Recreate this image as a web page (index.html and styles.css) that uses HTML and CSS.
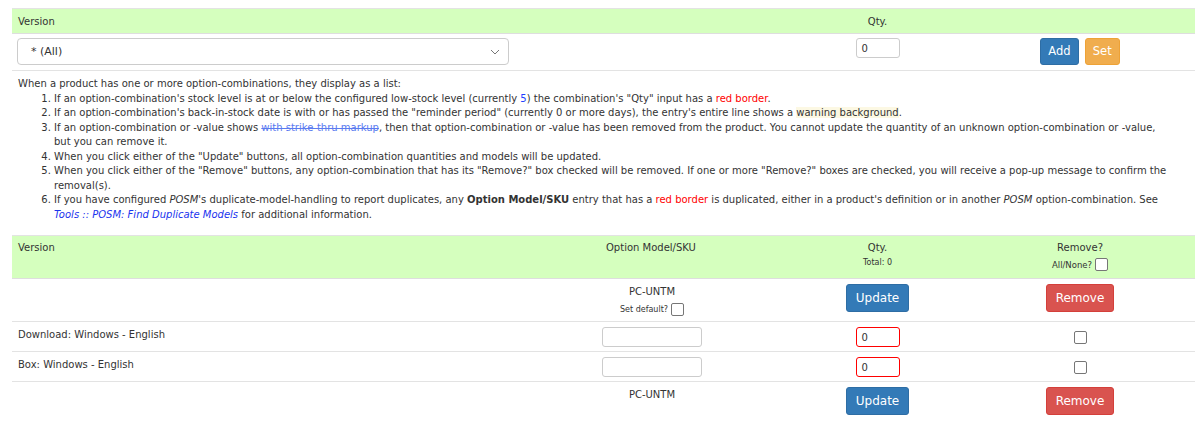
FILE: index.html
```html
<!DOCTYPE html>
<html>
<head>
<meta charset="utf-8">
<link rel="stylesheet" href="styles.css">
</head>
<body>
<div class="page">
  <div class="tbl top">
    <div class="row head">
      <div class="c c-ver">Version</div>
      <div class="c c-qty center">Qty.</div>
      <div class="c c-act"></div>
    </div>
    <div class="row body-row">
      <div class="c c-ver">
        <div class="select"><span>* (All)</span>
          <svg class="chev" width="10" height="6" viewBox="0 0 10 6"><path d="M1 1l4 4 4-4" fill="none" stroke="#777" stroke-width="1"/></svg>
        </div>
      </div>
      <div class="c c-qty center"><div class="qty">0</div></div>
      <div class="c c-act center">
        <span class="btn btn-primary sm">Add</span>
        <span class="btn btn-warning sm">Set</span>
      </div>
    </div>
  </div>

  <div class="notes">
    <p>When a product has one or more option-combinations, they display as a list:</p>
    <ol>
      <li>If an option-combination's stock level is at or below the configured low-stock level (currently <span class="blue">5</span>) the combination's "Qty" input has a <span class="red">red border</span>.</li>
      <li>If an option-combination's back-in-stock date is with or has passed the "reminder period" (currently 0 or more days), the entry's entire line shows a <span class="warn">warning background</span>.</li>
      <li>If an option-combination or -value shows <span class="strike">with strike-thru markup</span>, then that option-combination or -value has been removed from the product. You cannot update the quantity of an unknown option-combination or -value,<br>but you can remove it.</li>
      <li>When you click either of the "Update" buttons, all option-combination quantities and models will be updated.</li>
      <li>When you click either of the "Remove" buttons, any option-combination that has its "Remove?" box checked will be removed. If one or more "Remove?" boxes are checked, you will receive a pop-up message to confirm the removal(s).</li>
      <li>If you have configured <i>POSM</i>'s duplicate-model-handling to report duplicates, any <b>Option Model/SKU</b> entry that has a <span class="red">red border</span> is duplicated, either in a product's definition or in another <i>POSM</i> option-combination. See<br><a class="link">Tools :: POSM: Find Duplicate Models</a> for additional information.</li>
    </ol>
  </div>

  <div class="tbl bottom">
    <div class="row head head2">
      <div class="c c-ver">Version</div>
      <div class="c c-model">Option Model/SKU</div>
      <div class="c c-qty center">Qty.<div class="small">Total: 0</div></div>
      <div class="c c-act center">Remove?<div class="small allnone">All/None? <span class="cb"></span></div></div>
    </div>
    <div class="row r-btn">
      <div class="c c-ver"></div>
      <div class="c c-model"><div class="model-box">PC-UNTM<div class="small setdef">Set default? <span class="cb"></span></div></div></div>
      <div class="c c-qty center"><span class="btn btn-primary">Update</span></div>
      <div class="c c-act center"><span class="btn btn-danger">Remove</span></div>
    </div>
    <div class="row r-item">
      <div class="c c-ver">Download: Windows - English</div>
      <div class="c c-model"><div class="model-input"></div></div>
      <div class="c c-qty center"><div class="qty err">0</div></div>
      <div class="c c-act center"><span class="cb"></span></div>
    </div>
    <div class="row r-item">
      <div class="c c-ver">Box: Windows - English</div>
      <div class="c c-model"><div class="model-input"></div></div>
      <div class="c c-qty center"><div class="qty err">0</div></div>
      <div class="c c-act center"><span class="cb"></span></div>
    </div>
    <div class="row r-btn last">
      <div class="c c-ver"></div>
      <div class="c c-model"><div class="model-box">PC-UNTM</div></div>
      <div class="c c-qty center"><span class="btn btn-primary">Update</span></div>
      <div class="c c-act center"><span class="btn btn-danger">Remove</span></div>
    </div>
  </div>
</div>
</body>
</html>
```

FILE: styles.css
```css
* { box-sizing: border-box; }
html, body { margin: 0; padding: 0; background: #fff; }
body {
  font-family: "DejaVu Sans", Verdana, sans-serif;
  font-size: 10px;
  color: #333;
}
.page { padding: 8px 5px 0 12px; }

.tbl { border-top: 1px solid #e3e3e3; }
.row { display: grid; grid-template-columns: 778px 175px 1fr; }
.bottom .row { grid-template-columns: 588px 190px 175px 1fr; }
.head { background: #d5ffbe; border-bottom: 1px solid #dedede; }
.top .head { height: 25px; }
.top .head .c { padding: 7px 6px 0; }
.body-row { height: 37px; border-bottom: 1px solid #e3e3e3; }
.body-row .c { padding: 4px 5px 0; }
.center { text-align: center; }

.select {
  width: 492px; height: 27px; border: 1px solid #ccc; border-radius: 4px;
  display: flex; align-items: center; justify-content: space-between;
  padding: 0 8px 0 13px; font-size: 11px; color: #333;
}
.chev { margin-top: 1px; }
.qty {
  display: inline-block; width: 44px; height: 20px; border: 1px solid #ccc;
  border-radius: 3px; text-align: left; padding: 3px 0 0 5px; font-size: 10px; line-height: 13px;
}
.qty.err { border-color: #f00; }

.btn {
  display: inline-block; color: #fff; font-size: 12px; border-radius: 3px;
  height: 28px; line-height: 26px; padding: 0 9px; border: 1px solid transparent;
}
.btn.sm { height: 27px; line-height: 25px; padding: 0 7px; font-size: 11.5px; }
.btn + .btn { margin-left: 3px; }
.btn-primary { background: #337ab7; border-color: #2e6da4; }
.btn-warning { background: #f0ad4e; border-color: #eea236; }
.btn-danger { background: #d9534f; border-color: #d43f3a; }

.notes { padding: 6px 0 0 6px; line-height: 14.5px; font-size: 10px; }
.notes p { margin: 0; }
.notes ol { margin: 0 0 13px; padding-left: 36px; }
.blue { color: #1f3fff; }
.red { color: #f00; }
.warn { background: #fcf8e3; }
.strike { color: #5b7bf0; text-decoration: line-through; }
.link { color: #1a33ee; font-style: italic; }

.head2 { height: 43px; }
.head2 .c { padding: 6px 6px 0; line-height: 12px; }
.small { font-size: 8px; line-height: 12px; margin-top: 3px; }
.allnone { font-size: 8.5px; margin-top: 4px; display: flex; justify-content: center; align-items: center; gap: 3px; }
.cb {
  display: inline-block; width: 13px; height: 13px; border: 1px solid #767676;
  border-radius: 2px; background: #fff; vertical-align: middle;
}
.r-btn { height: 43px; border-bottom: 1px solid #e3e3e3; }
.r-btn .c { padding-top: 5px; }
.r-btn .c-model { padding: 7px 0 0 2px; }
.model-box { width: 100px; text-align: center; line-height: 12px; }
.setdef { display: flex; justify-content: center; align-items: center; gap: 3px; margin-top: 5px; }
.r-item { height: 30px; border-bottom: 1px solid #e3e3e3; }
.r-item .c { padding-top: 5px; }
.r-item .c-ver { padding: 7px 6px 0; }
.r-item .c-model { padding-left: 2px; }
.model-input { width: 100px; height: 20px; border: 1px solid #ccc; border-radius: 3px; }
.r-item .c-act { padding-top: 9px; }
.r-item .cb { vertical-align: top; }
.last { border-bottom: none; }
```
